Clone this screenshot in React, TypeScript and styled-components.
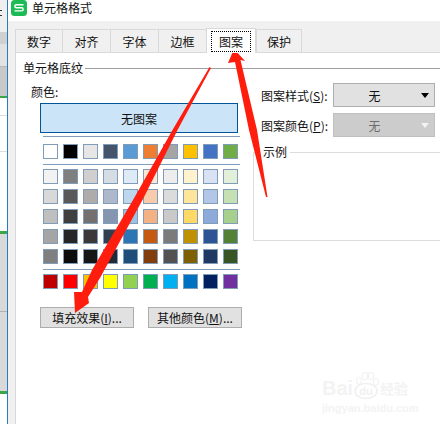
import React from "react";
import styled, { createGlobalStyle } from "styled-components";

const Global = createGlobalStyle`
  html, body { margin: 0; padding: 0; background: #fff; }
  * { box-sizing: border-box; }
  body { font-family: "Noto Sans CJK SC", "Liberation Sans", sans-serif; font-size: 12px; color: #111; }
`;

const Page = styled.div`
  position: relative;
  width: 440px;
  height: 424px;
  overflow: hidden;
  display: flex;
`;

const SheetStrip = styled.div`
  width: 8px;
  height: 424px;
  flex: none;
  display: flex;
  flex-direction: column;
  border-right: 1px solid #2a7cc0;
  background: #fff;
`;

const SheetCell = styled.div<{ $h: number; $bg: string; $line?: string }>`
  height: ${(p) => p.$h}px;
  flex: none;
  background: ${(p) => p.$bg};
  border-bottom: 1px solid ${(p) => p.$line ?? "transparent"};
`;

const SheetMark = styled.div`
  width: 2px;
  height: 6px;
  margin-top: 10px;
  border-top: 1px solid #333;
  border-bottom: 1px solid #333;
`;

const Dialog = styled.div`
  flex: 1;
  min-width: 0;
  display: flex;
  flex-direction: column;
  background: #f0f0f0;
`;

const TitleBar = styled.div`
  height: 21px;
  flex: none;
  background: #fff;
  display: flex;
  align-items: flex-start;
  padding-left: 3px;
  gap: 5px;
`;

const Title = styled.span`
  font-size: 12px;
  line-height: 16px;
`;

const TabRow = styled.div`
  height: 32px;
  flex: none;
  padding: 7px 0 0 7px;
  display: flex;
  align-items: flex-end;
  margin-bottom: -1px;
  position: relative;
  z-index: 1;
`;

const Tab = styled.div<{ $w: number }>`
  width: ${(p) => p.$w}px;
  height: 23px;
  flex: none;
  margin-bottom: 1px;
  display: flex;
  align-items: center;
  justify-content: center;
  border: 1px solid #d9d9d9;
  border-bottom: none;
  border-right-width: ${(p) => (p.$w === 46 ? 1 : 0)}px;
  background: #f0f0f0;
  font-size: 12px;
`;

const ActiveTab = styled.div`
  width: 50px;
  height: 25px;
  flex: none;
  padding: 2px 4px 2px 4px;
  background: #fff;
  border: 1px solid #d9d9d9;
  border-bottom: none;
`;

const FocusBox = styled.div`
  height: 21px;
  border: 1px dotted #000;
  display: flex;
  align-items: center;
  justify-content: center;
  font-size: 12px;
`;

const Panel = styled.div`
  flex: 1;
  margin-left: 7px;
  background: #fff;
  border-top: 1px solid #d9d9d9;
  border-left: 1px solid #d9d9d9;
  padding-top: 8px;
`;

const GroupHead = styled.div`
  height: 14px;
  display: flex;
  align-items: center;
  padding-left: 7px;
  gap: 2px;
  line-height: 14px;
  &::after {
    content: "";
    flex: 1;
    height: 1px;
    background: #a0a0a0;
  }
`;

const Columns = styled.div`
  display: flex;
`;

const LeftCol = styled.div`
  width: 237px;
  flex: none;
  padding-top: 10px;
`;

const ColorLabel = styled.div`
  padding-left: 15px;
  line-height: 14px;
  height: 14px;
`;

const NoPattern = styled.div`
  width: 198px;
  height: 30px;
  margin: 4px 0 0 24px;
  background: #cce4f7;
  border: 1px solid #005499;
  display: flex;
  align-items: center;
  justify-content: center;
`;

const Rule = styled.div<{ $top: number; $bottom: number }>`
  width: 197px;
  height: 1px;
  margin: ${(p) => p.$top}px 0 ${(p) => p.$bottom}px 27px;
  background: #7f9db9;
`;

const SwatchGrid = styled.div`
  margin-left: 27px;
  display: grid;
  grid-template-columns: repeat(10, 15px);
  column-gap: 5px;
  row-gap: 5px;
`;

const Swatch = styled.div<{ $c: string }>`
  width: 15px;
  height: 15px;
  background: ${(p) => p.$c};
  border: 1px solid #7f9db9;
`;

const ButtonRow = styled.div`
  display: flex;
  gap: 14px;
  margin: 18px 0 0 24px;
`;

const PlainButton = styled.div`
  width: 94px;
  height: 21px;
  background: #e1e1e1;
  border: 1px solid #adadad;
  display: flex;
  align-items: center;
  justify-content: center;
  font-size: 12px;
  white-space: nowrap;
`;

const RightCol = styled.div`
  flex: 1;
  min-width: 0;
  padding-top: 8px;
`;

const FieldRow = styled.div<{ $gap: number }>`
  display: flex;
  align-items: center;
  padding-left: 8px;
  margin-bottom: ${(p) => p.$gap}px;
  height: 24px;
`;

const FieldLabel = styled.div`
  width: 72px;
  flex: none;
  white-space: nowrap;
`;

const Select = styled.div<{ $off?: boolean }>`
  width: 102px;
  height: 24px;
  flex: none;
  padding: 0 5px 0 0;
  display: flex;
  align-items: center;
  background: ${(p) => (p.$off ? "#cccccc" : "#e1e1e1")};
  border: 1px solid ${(p) => (p.$off ? "#bfbfbf" : "#adadad")};
  color: ${(p) => (p.$off ? "#6d6d6d" : "#111")};
`;

const SelectValue = styled.span`
  flex: 1;
  text-align: center;
  padding-right: 6px;
`;

const Caret = styled.span<{ $off?: boolean }>`
  width: 0;
  height: 0;
  border-left: 4px solid transparent;
  border-right: 4px solid transparent;
  border-top: 5px solid ${(p) => (p.$off ? "#f2f2f2" : "#000")};
`;

const Sample = styled.fieldset`
  margin: 9px -3px 0 0;
  padding: 0;
  height: 95px;
  border: 1px solid #dcdcdc;
  min-width: 0;
`;

const SampleLegend = styled.legend`
  margin-left: 6px;
  padding: 0 3px;
  font-size: 12px;
  line-height: 12px;
`;

const Overlay = styled.svg`
  position: absolute;
  left: 0;
  top: 0;
  pointer-events: none;
`;

const Watermark = styled.div`
  position: absolute;
  left: 322px;
  top: 369px;
  width: 92px;
  color: #f3f3f3;
  font-family: "Liberation Sans", "Noto Sans CJK SC", sans-serif;
  font-weight: 700;
`;

const MarkLine = styled.div`
  display: flex;
  align-items: center;
  height: 30px;
  font-size: 20px;
  line-height: 20px;
  padding-top: 8px;
`;

const MarkPaw = styled.svg`
  width: 28px;
  height: 30px;
  margin: -6px 0 0 -1px;
  flex: none;
`;

const MarkCn = styled.span`
  font-size: 14px;
  font-family: "Noto Sans CJK SC", sans-serif;
`;

const MarkUrl = styled.div`
  font-size: 11px;
  line-height: 12px;
  margin-top: 3px;
  white-space: nowrap;
`;

const themeRows = [
  ["#ffffff", "#000000", "#e7e6e6", "#44546a", "#5b9bd5", "#ed7d31", "#a5a5a5", "#ffc000", "#4472c4", "#70ad47"],
];
const tintRows = [
  ["#f2f2f2", "#7f7f7f", "#d0cece", "#d6dce4", "#deebf6", "#fbe5d5", "#ededed", "#fff2cc", "#d9e2f3", "#e2efd9"],
  ["#d8d8d8", "#595959", "#aeabab", "#adb9ca", "#bdd7ee", "#f7cbac", "#dbdbdb", "#fee599", "#b4c6e7", "#c5e0b3"],
  ["#bfbfbf", "#3f3f3f", "#757070", "#8496b0", "#9cc3e5", "#f4b183", "#c9c9c9", "#ffd965", "#8eaadb", "#a8d08d"],
  ["#a5a5a5", "#262626", "#3a3838", "#323f4f", "#2e75b5", "#c55a11", "#7b7b7b", "#bf9000", "#2f5496", "#538135"],
  ["#7f7f7f", "#0c0c0c", "#171616", "#222a35", "#1e4e79", "#833c0b", "#525252", "#7f6000", "#1f3864", "#375623"],
];
const standardRows = [
  ["#c00000", "#ff0000", "#ffc000", "#ffff00", "#92d050", "#00b050", "#00b0f0", "#0070c0", "#002060", "#7030a0"],
];

const strip = [
  { h: 32, bg: "#efefef" },
  { h: 12, bg: "#d0d0d0" },
  { h: 23, bg: "#e2e2e2", line: "#b8b8b8" },
  { h: 29, bg: "#c8c8c8" },
  { h: 2, bg: "#3aa648" },
  { h: 18, bg: "#ffffff", line: "#dddddd" },
  { h: 36, bg: "#ffffff", line: "#dddddd" },
  { h: 79, bg: "#ffffff" },
  { h: 3, bg: "#3aa648" },
  { h: 78, bg: "#d9d9d9", line: "#b0b0b0" },
  { h: 79, bg: "#d9d9d9" },
  { h: 3, bg: "#3aa648" },
  { h: 30, bg: "#ffffff" },
];

const Swatches = ({ rows }: { rows: string[][] }) => (
  <SwatchGrid>
    {rows.flat().map((c, i) => (
      <Swatch key={i} $c={c} />
    ))}
  </SwatchGrid>
);

const Logo = () => (
  <svg width="16" height="16" viewBox="0 0 16 16">
    <rect width="16" height="16" rx="3.5" fill="#1dbb55" />
    <path d="M12.5 4.7H5.2C3.4 4.7 3.4 7.7 5.2 7.7H10.8C12.6 7.7 12.6 10.9 10.8 10.9H3.5" fill="none" stroke="#fff" strokeWidth="1.4" />
  </svg>
);

export default function App() {
  return (
    <Page>
      <Global />
      <SheetStrip>
        <SheetCell $h={32} $bg={strip[0].bg}>
          <SheetMark />
        </SheetCell>
        {strip.slice(1).map((s, i) => (
          <SheetCell key={i} $h={s.h} $bg={s.bg} $line={s.line} />
        ))}
      </SheetStrip>
      <Dialog>
        <TitleBar>
          <Logo />
          <Title>单元格格式</Title>
        </TitleBar>
        <TabRow>
          <Tab $w={47}>数字</Tab>
          <Tab $w={48}>对齐</Tab>
          <Tab $w={48}>字体</Tab>
          <Tab $w={48}>边框</Tab>
          <ActiveTab>
            <FocusBox>图案</FocusBox>
          </ActiveTab>
          <Tab $w={46}>保护</Tab>
        </TabRow>
        <Panel>
          <GroupHead>单元格底纹</GroupHead>
          <Columns>
            <LeftCol>
              <ColorLabel>颜色:</ColorLabel>
              <NoPattern>无图案</NoPattern>
              <Rule $top={3} $bottom={7} />
              <Swatches rows={themeRows} />
              <Rule $top={5} $bottom={4} />
              <Swatches rows={tintRows} />
              <Rule $top={5} $bottom={4} />
              <Swatches rows={standardRows} />
              <ButtonRow>
                <PlainButton>填充效果(<u>I</u>)...</PlainButton>
                <PlainButton>其他颜色(<u>M</u>)...</PlainButton>
              </ButtonRow>
            </LeftCol>
            <RightCol>
              <FieldRow $gap={6}>
                <FieldLabel>图案样式(<u>S</u>):</FieldLabel>
                <Select>
                  <SelectValue>无</SelectValue>
                  <Caret />
                </Select>
              </FieldRow>
              <FieldRow $gap={0}>
                <FieldLabel>图案颜色(<u>P</u>):</FieldLabel>
                <Select $off>
                  <SelectValue>无</SelectValue>
                  <Caret $off />
                </Select>
              </FieldRow>
              <Sample>
                <SampleLegend>示例</SampleLegend>
              </Sample>
            </RightCol>
          </Columns>
        </Panel>
      </Dialog>
      <Watermark>
        <MarkLine>
          Bai
          <MarkPaw viewBox="0 0 28 30">
            <ellipse cx="14" cy="21" rx="11" ry="7.5" fill="none" stroke="#f0f0f0" strokeWidth="1.6" />
            <ellipse cx="7" cy="11" rx="2.6" ry="3.4" fill="none" stroke="#f0f0f0" />
            <ellipse cx="13" cy="6" rx="2.8" ry="3.8" fill="none" stroke="#f0f0f0" />
            <ellipse cx="19" cy="6" rx="2.8" ry="3.8" fill="none" stroke="#f0f0f0" />
            <ellipse cx="24" cy="12" rx="2.6" ry="3.4" fill="none" stroke="#f0f0f0" />
            <text x="14" y="25" fontSize="11" textAnchor="middle" fill="#f0f0f0" fontFamily="Liberation Sans" fontWeight="700">du</text>
          </MarkPaw>
          <MarkCn>经验</MarkCn>
        </MarkLine>
        <MarkUrl>jingyan.baidu.com</MarkUrl>
      </Watermark>
      <Overlay width="440" height="424" viewBox="0 0 440 424">
        <polygon fill="#ff1d0d" points="209.5,67 211,68 177.5,130 143,199 100,278 88,297 89,303 75,313 74,292 82,292 92,270 133,200 172.5,130" />
        <polygon fill="#ff1d0d" points="234,49 245,61 240.5,60 257,130 267.5,197 266,197 249,130 235,62 228,63" />
      </Overlay>
    </Page>
  );
}
